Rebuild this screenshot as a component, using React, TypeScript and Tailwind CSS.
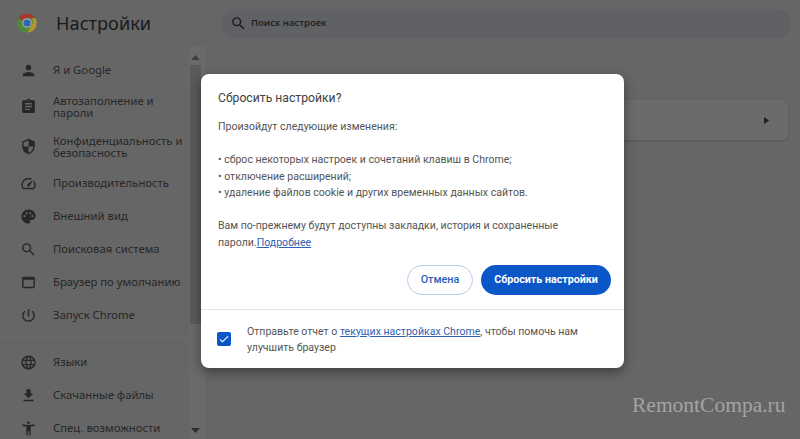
import {
  MdPerson,
  MdAssignment,
  MdSecurity,
  MdOutlineSpeed,
  MdPalette,
  MdSearch,
  MdOutlineWebAsset,
  MdPowerSettingsNew,
  MdLanguage,
  MdFileDownload,
  MdAccessibilityNew,
  MdCheck,
} from "react-icons/md"
import type { IconType } from "react-icons"

interface NavItem {
  label: string[]
  icon: IconType
}

const mainItems: NavItem[] = [
  { label: ["Я и Google"], icon: MdPerson },
  { label: ["Автозаполнение и", "пароли"], icon: MdAssignment },
  { label: ["Конфиденциальность и", "безопасность"], icon: MdSecurity },
  { label: ["Производительность"], icon: MdOutlineSpeed },
  { label: ["Внешний вид"], icon: MdPalette },
  { label: ["Поисковая система"], icon: MdSearch },
  { label: ["Браузер по умолчанию"], icon: MdOutlineWebAsset },
  { label: ["Запуск Chrome"], icon: MdPowerSettingsNew },
]

const extraItems: NavItem[] = [
  { label: ["Языки"], icon: MdLanguage },
  { label: ["Скачанные файлы"], icon: MdFileDownload },
  { label: ["Спец. возможности"], icon: MdAccessibilityNew },
]

function ChromeLogo() {
  return (
    <svg width="20" height="20" viewBox="0 0 48 48">
      <circle cx="24" cy="24" r="23" fill="#4d8a3a" />
      <path d="M24 1a23 23 0 0 1 20 11.5H24a11.5 11.5 0 0 0-10 5.8L4 12.5A23 23 0 0 1 24 1z" fill="#a5382f" />
      <path d="M44 12.5A23 23 0 0 1 25 47l10-17.5a11.5 11.5 0 0 0 0-17z" fill="#b8922b" />
      <circle cx="24" cy="24" r="11.5" fill="#a8a8a8" />
      <circle cx="24" cy="24" r="8.5" fill="#2f62b8" />
    </svg>
  )
}

function NavRow({ item }: { item: NavItem }) {
  const Icon = item.icon
  const tall = item.label.length > 1
  return (
    <div className={tall ? "flex h-10 items-center" : "flex h-[33px] items-center"}>
      <div className="flex w-[53px] shrink-0 justify-center pl-[4px]">
        <Icon size={17} className="text-[#272727]" />
      </div>
      <div className="text-[11.3px] leading-[11.5px] whitespace-nowrap text-[#272727]">
        {item.label.map((line) => (
          <div key={line}>{line}</div>
        ))}
      </div>
    </div>
  )
}

export default function App() {
  return (
    <div className="relative h-[439px] w-[800px] overflow-hidden bg-[#666666] font-['Noto_Sans',sans-serif]">
      <header className="flex h-[46px] items-center">
        <div className="flex w-[56px] shrink-0 justify-center pr-[2px]">
          <ChromeLogo />
        </div>
        <h1 className="w-[165px] shrink-0 pt-[2px] text-[18.2px] font-normal text-[#1a1a1a]">Настройки</h1>
        <div className="flex h-[29px] w-[570px] items-center gap-[4px] rounded-full bg-[#5f6165] pl-[9px]">
          <MdSearch size={17} className="text-[#1d1d1d]" />
          <span className="font-['Open_Sans',sans-serif] text-[9.5px] font-semibold text-[#1d1d1d]">Поиск настроек</span>
        </div>
      </header>

      <div className="flex h-[393px]">
        <aside className="w-[189px] shrink-0 pt-[7.5px]">
          {mainItems.map((item) => (
            <NavRow key={item.label[0]} item={item} />
          ))}
          <div className="mt-[5px] mb-[8px] h-px bg-[#6d6d6d]" />
          {extraItems.map((item) => (
            <NavRow key={item.label[0]} item={item} />
          ))}
        </aside>

        <div className="flex w-[16px] shrink-0 flex-col items-center bg-[#6a6a6a] pr-[3px]">
          <svg width="9" height="5" viewBox="0 0 9 5" className="mt-[9px] mb-[5px] shrink-0">
            <path d="M0 5L4.5 0L9 5z" fill="#3f3f3f" />
          </svg>
          <div className="h-[259px] w-[11px] shrink-0 bg-[#5a5a5a]" />
          <svg width="9" height="5" viewBox="0 0 9 5" className="mt-[104px] shrink-0">
            <path d="M0 0L9 0L4.5 5z" fill="#2d2d2d" />
          </svg>
        </div>

        <main className="flex-1 pt-[54px] pr-[12px] pl-[60px]">
          <div className="flex h-[40px] items-center justify-end rounded-[6px] bg-[#6b6b6b] pr-[19px] shadow-[0_1px_2px_#555555]">
            <svg width="5" height="7" viewBox="0 0 5 7">
              <path d="M0 0L5 3.5L0 7z" fill="#1f1f1f" />
            </svg>
          </div>
        </main>
      </div>

      <div className="absolute top-[393px] left-[632px] font-['Liberation_Serif',serif] text-[21.5px] leading-[24px] text-[#a3a3a3]">
        RemontCompa.ru
      </div>

      <div className="absolute top-[74px] left-[201px] w-[423px] rounded-[8px] bg-white font-['Roboto',sans-serif] shadow-[0_4px_12px_rgba(0,0,0,0.4)]">
        <div className="h-[235px] pt-[15px] pr-[13px] pl-[17px]">
          <h2 className="text-[12.2px] leading-[18px] font-normal text-[#3f3f3f]">Сбросить настройки?</h2>
          <div className="mt-[12px] text-[10.55px] leading-[16.5px] text-[#555555]">
            <p>Произойдут следующие изменения:</p>
            <p className="mt-[16.5px]">• сброс некоторых настроек и сочетаний клавиш в Chrome;</p>
            <p>• отключение расширений;</p>
            <p>• удаление файлов cookie и других временных данных сайтов.</p>
            <p className="mt-[16.5px]">Вам по-прежнему будут доступны закладки, история и сохраненные</p>
            <p>
              пароли.<a className="text-[#2f62b5] underline">Подробнее</a>
            </p>
          </div>
          <div className="mt-[14px] flex justify-end gap-[8px]">
            <button className="h-[30px] w-[66px] rounded-full border border-[#b5cdea] text-[10.8px] font-medium text-[#2f62b5]">
              Отмена
            </button>
            <button className="h-[30px] w-[130px] rounded-full bg-[#0b57c8] text-[10.7px] font-bold text-white">
              Сбросить настройки
            </button>
          </div>
        </div>
        <div className="flex h-[59px] items-center border-t border-[#e4e4e4] pl-[16px]">
          <div className="flex size-[14px] shrink-0 items-center justify-center rounded-[2px] bg-[#0b57c8]">
            <MdCheck size={12} className="text-white" />
          </div>
          <p className="ml-[16px] w-[350px] pt-[1px] text-[10.55px] leading-[16px] text-[#555555]">
            Отправьте отчет о <a className="text-[#2f62b5] underline">текущих настройках Chrome</a>, чтобы помочь нам
            улучшить браузер
          </p>
        </div>
      </div>
    </div>
  )
}
